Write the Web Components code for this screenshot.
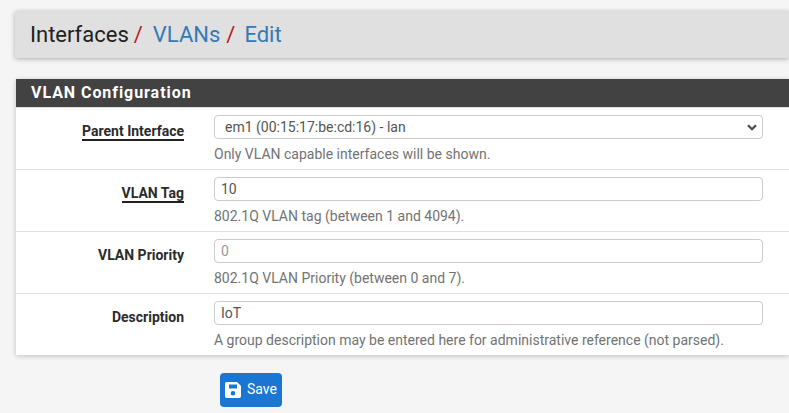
<!DOCTYPE html>
<html><head><meta charset="utf-8"><style>
html,body{margin:0;padding:0;background:#f5f5f5;height:413px;overflow:hidden}
body{font-family:Roboto,sans-serif;color:#212121}
</style></head><body>
<vlan-page>
<page-crumbs><span>Interfaces</span><a slot="l1">VLANs</a><a slot="l2">Edit</a></page-crumbs>
<config-panel title="VLAN Configuration">
<form-row label="Parent Interface" underline help="Only VLAN capable interfaces will be shown."><select-field value="em1 (00:15:17:be:cd:16) - lan"></select-field></form-row>
<form-row label="VLAN Tag" underline help="802.1Q VLAN tag (between 1 and 4094)."><text-field value="10"></text-field></form-row>
<form-row label="VLAN Priority" help="802.1Q VLAN Priority (between 0 and 7)."><text-field placeholder="0"></text-field></form-row>
<form-row label="Description" help="A group description may be entered here for administrative reference (not parsed)."><text-field value="IoT"></text-field></form-row>
</config-panel>
<save-button>Save</save-button>
</vlan-page>
<script>
function def(name,html,init){customElements.define(name,class extends HTMLElement{constructor(){super();this.attachShadow({mode:'open'}).innerHTML=typeof html==='function'?html(this):html}connectedCallback(){if(init)init(this)}})}
def('vlan-page',`<style>:host{display:flex;flex-direction:column;padding:11px 0 0 15px}</style><slot></slot>`);
def('page-crumbs',`<style>
:host{display:flex;align-items:center;height:47px;background:#e0e0e0;box-shadow:0 1px 5px rgba(0,0,0,.3);border-radius:2px 0 0 2px;padding-left:15px;font-size:22px;line-height:1;color:#212121}
::slotted(a){color:#337ab7}
.s{color:#b71c1c;margin:0 0 0 5px}
.s2{margin-left:6px}
.l1{margin-left:10px}.l2{margin-left:9px}
</style><slot></slot><span class="s">/</span><span class="l1"><slot name="l1"></slot></span><span class="s s2">/</span><span class="l2"><slot name="l2"></slot></span>`);
def('config-panel',el=>`<style>
:host{display:block;margin:21px 0 0 1px;background:#fff;box-shadow:0 1px 5px rgba(0,0,0,.22)}
h2{margin:0;height:28px;background:#424242;color:#fff;font:700 16px/27px Roboto,sans-serif;letter-spacing:.94px;padding-left:15px}
</style><h2>${el.getAttribute('title')}</h2><slot></slot>`);
def('form-row',el=>`<style>
:host{display:grid;grid-template-columns:168px 549px;column-gap:30px;height:61px;border-top:1px solid #e0e0e0}
.l{justify-self:end;align-self:start;margin-top:15px;font:700 14px/17px Roboto,sans-serif;color:#2b2b2b;height:17px;${el.hasAttribute('underline')?'border-bottom:2px solid #212121;height:16px;':''}}
.r{padding-top:7px;min-width:0}
.h{margin-top:7px;font:14px/16px Roboto,sans-serif;color:#737373;white-space:nowrap}
</style><div class="l">${el.getAttribute('label')}</div><div class="r"><slot></slot><div class="h">${el.getAttribute('help')}</div></div>`);
const fs=`box-sizing:border-box;display:block;width:100%;height:24px;border:1px solid #ccc;border-radius:4px;background:#fff;font:14px Roboto,sans-serif;color:#555;outline:0;margin:0;`;
def('select-field',el=>`<style>:host{display:block}
.b{${fs}position:relative;display:flex;align-items:center;padding-left:10px}
svg{position:absolute;right:5px;top:8px}</style><div class="b">${el.getAttribute('value')}<svg width="10" height="7" viewBox="0 0 10 7"><path d="M1 1.3 5 5.3 9 1.3" fill="none" stroke="#4a4a4a" stroke-width="2.2"/></svg></div>`);
def('text-field',el=>`<style>:host{display:block}
input{${fs}padding:0 6px}input::placeholder{color:#999;opacity:1}</style><input value="${el.getAttribute('value')||''}" placeholder="${el.getAttribute('placeholder')||''}">`);
def('save-button',`<style>
:host{display:inline-flex;align-self:flex-start;align-items:center;gap:6px;margin:18px 0 0 205px;height:34px;width:62px;box-sizing:border-box;padding-left:5px;background:#1976d2;border-radius:4px;color:#fff;font:400 14px Roboto,sans-serif}
span{padding-bottom:2px}
</style><svg width="16" height="16" viewBox="0 0 16 16"><path fill="#fff" fill-rule="evenodd" d="M1.7 0H12L16 4V14.3A1.7 1.7 0 0 1 14.3 16H1.7A1.7 1.7 0 0 1 0 14.3V1.7A1.7 1.7 0 0 1 1.7 0ZM4 2.5V6.5H12V2.5ZM8 9A2.3 2.3 0 1 0 8 13.6 2.3 2.3 0 1 0 8 9Z"/></svg><span><slot></slot></span>`);
</script></body></html>
